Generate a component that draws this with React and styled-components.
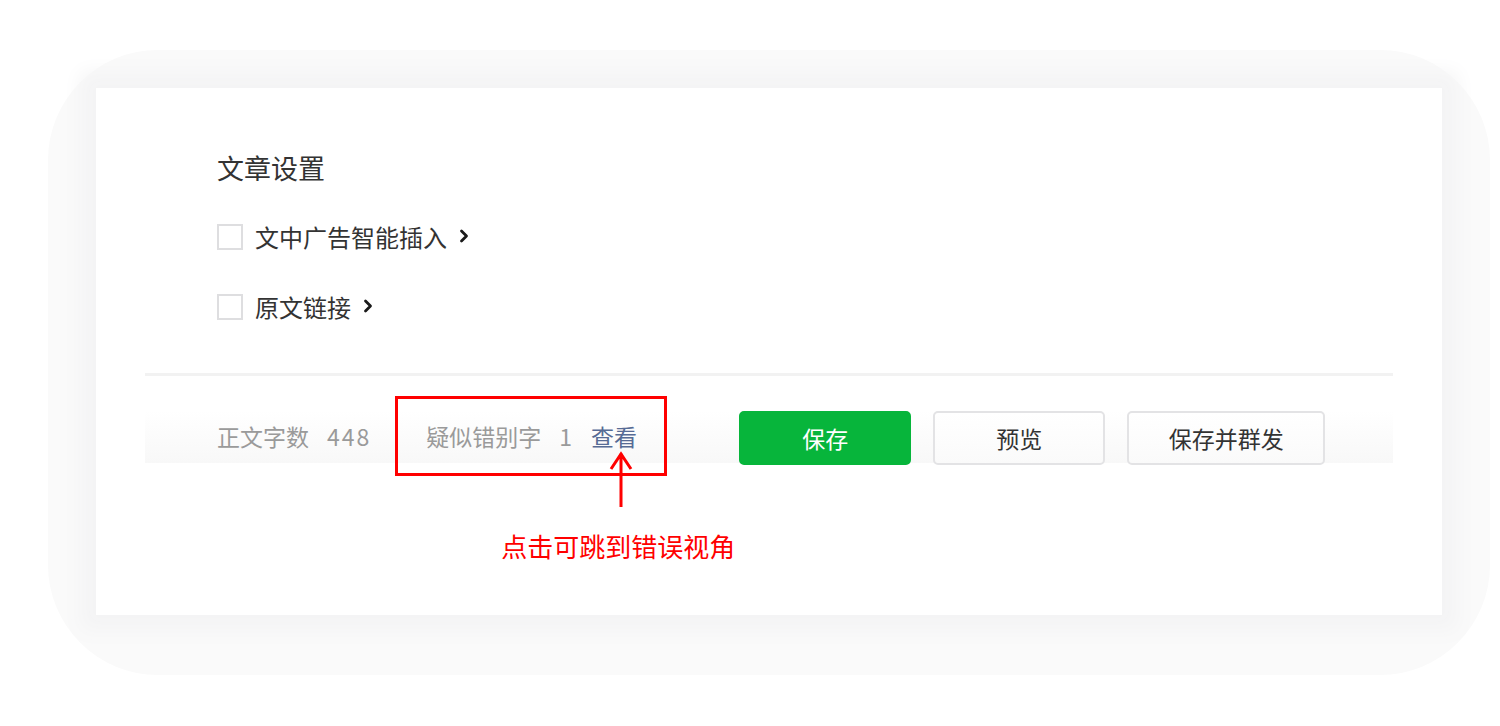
import React from 'react'
import styled, { createGlobalStyle } from 'styled-components'

const GlobalStyle = createGlobalStyle`
  html, body {
    margin: 0;
    padding: 0;
    background: #ffffff;
    font-family: "Noto Sans CJK SC", "Noto Sans", sans-serif;
  }
`

const Page = styled.div`
  width: 1500px;
  height: 726px;
  padding: 50px 0 0 48px;
  box-sizing: border-box;
  overflow: hidden;
`

const Frame = styled.div`
  width: 1442px;
  height: 625px;
  box-sizing: border-box;
  padding: 38px 48px 0 48px;
  border-radius: 110px;
  background: #fafafa;
`

const Panel = styled.div`
  width: 1346px;
  height: 527px;
  background: #ffffff;
  box-shadow: 0 0 18px 16px #f4f4f5;
  padding-top: 62px;
  box-sizing: border-box;
`

const Settings = styled.div`
  padding-left: 121px;
`

const Title = styled.div`
  font-size: 27px;
  line-height: 36px;
  color: #333333;
  margin-bottom: 38px;
`

const Row = styled.label`
  display: flex;
  align-items: center;
  height: 26px;
  margin-bottom: ${p => p.$gap || 0}px;
`

const Check = styled.span`
  width: 26px;
  height: 26px;
  box-sizing: border-box;
  border: 2px solid #dedee0;
  background: #fff;
`

const RowText = styled.span`
  margin-left: 12px;
  font-size: 24px;
  line-height: 26px;
  color: #333333;
`

const Chevron = styled.svg`
  margin-left: 12px;
  margin-top: -3px;
`

const Footer = styled.div`
  margin: 53px 49px 0 49px;
  padding: 20px 0 0 72px;
  border-top: 3px solid #f2f2f2;
  display: flex;
  align-items: center;
  background: linear-gradient(to bottom, #ffffff 40%, #f8f8f8 100%) no-repeat;
  background-size: 100% 87px;
`

const Stat = styled.span`
  font-size: 23px;
  line-height: 30px;
  color: #9a9a9a;
  margin-left: ${p => p.$ml || 0}px;
`

const Digits = styled(Stat)`
  letter-spacing: 2px;
`

const Link = styled.span`
  font-size: 23px;
  line-height: 30px;
  color: #576b95;
  margin-left: 19px;
`

const Marked = styled.div`
  position: relative;
  margin-left: 24px;
  width: 272px;
  height: 80px;
  box-sizing: border-box;
  border: 3px solid #ff0000;
  padding-left: 28px;
  display: flex;
  align-items: center;
`

const Arrow = styled.svg`
  position: absolute;
  left: 211px;
  top: 52px;
`

const Note = styled.div`
  position: absolute;
  left: 103px;
  top: 132px;
  white-space: nowrap;
  font-size: 26px;
  line-height: 30px;
  color: #ff0000;
`

const Buttons = styled.div`
  display: flex;
  gap: 22px;
  margin-left: 72px;
  margin-top: 4px;
`

const Button = styled.button`
  width: ${p => p.$w}px;
  height: 54px;
  border-radius: 5px;
  font-family: inherit;
  font-size: 23px;
  padding: 0;
  cursor: pointer;
  border: 2px solid ${p => (p.$primary ? '#07b53b' : '#e3e3e5')};
  background: ${p => (p.$primary ? '#07b53b' : 'linear-gradient(#ffffff, #fafafa)')};
  color: ${p => (p.$primary ? '#ffffff' : '#333333')};
`

const Arrowhead = () => (
  <Chevron width="10" height="16" viewBox="0 0 10 16">
    <path d="M2.5 3 L7.5 8 L2.5 13" fill="none" stroke="#1a1a1a" strokeWidth="2.8" strokeLinecap="round" strokeLinejoin="round" />
  </Chevron>
)

export default function App() {
  return (
    <Page>
      <GlobalStyle />
      <Frame>
        <Panel>
          <Settings>
            <Title>文章设置</Title>
            <Row $gap={44}>
              <Check />
              <RowText>文中广告智能插入</RowText>
              <Arrowhead />
            </Row>
            <Row>
              <Check />
              <RowText>原文链接</RowText>
              <Arrowhead />
            </Row>
          </Settings>
          <Footer>
            <Stat>正文字数</Stat>
            <Digits $ml={18}>448</Digits>
            <Marked>
              <Stat>疑似错别字</Stat>
              <Stat $ml={18}>1</Stat>
              <Link>查看</Link>
              <Arrow width="24" height="58" viewBox="0 0 24 58">
                <path d="M12 2 L12 56 M2 18 L12 3 L22 18" fill="none" stroke="#ff0000" strokeWidth="3" />
              </Arrow>
              <Note>点击可跳到错误视角</Note>
            </Marked>
            <Buttons>
              <Button $primary $w={172}>保存</Button>
              <Button $w={172}>预览</Button>
              <Button $w={198}>保存并群发</Button>
            </Buttons>
          </Footer>
        </Panel>
      </Frame>
    </Page>
  )
}
